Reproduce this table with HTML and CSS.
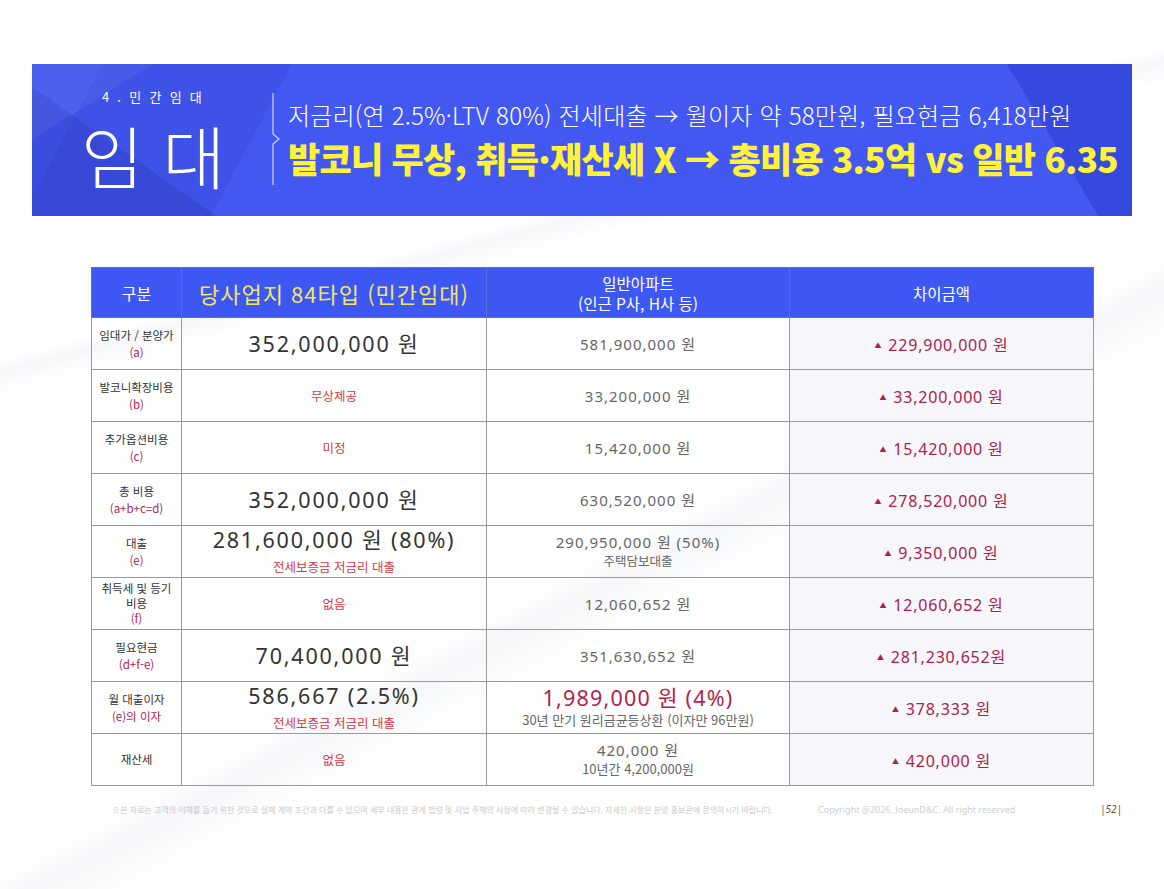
FILE: index.html
```html
<!DOCTYPE html>
<html lang="ko">
<head>
<meta charset="utf-8">
<title>임대</title>
<link rel="stylesheet" href="styles.css">
</head>
<body>
<div class="page">
  <header class="banner">
    <div class="banner-left">
      <div class="kicker">4 . 민 간 임 대</div>
      <div class="title">임 대</div>
    </div>
    <svg class="bracket" width="14" height="92" viewBox="0 0 14 92">
      <path d="M1 0 V41 L7 46 L1 51 V92" fill="none" stroke="rgba(255,255,255,0.75)" stroke-width="1.2"/>
    </svg>
    <div class="banner-text">
      <div class="line1">저금리(연 2.5%·LTV 80%) 전세대출 → 월이자 약 58만원, 필요현금 6,418만원</div>
      <div class="line2">발코니 무상, 취득·재산세 X → 총비용 3.5억 vs 일반 6.35</div>
    </div>
  </header>

  <table class="cmp">
    <colgroup>
      <col class="c1"><col class="c2"><col class="c3"><col class="c4">
    </colgroup>
    <thead>
      <tr>
        <th class="h-label">구분</th>
        <th class="h-ours">당사업지 84타입 (민간임대)</th>
        <th class="h-other">일반아파트<br>(인근 P사, H사 등)</th>
        <th class="h-other">차이금액</th>
      </tr>
    </thead>
    <tbody>
      <tr>
        <td class="lbl">임대가 / 분양가<br><span class="sub">(a)</span></td>
        <td class="big">352,000,000 원</td>
        <td class="mid">581,900,000 원</td>
        <td class="diff"><span class="tri">▲</span> 229,900,000 원</td>
      </tr>
      <tr>
        <td class="lbl">발코니확장비용<br><span class="sub">(b)</span></td>
        <td class="red">무상제공</td>
        <td class="mid">33,200,000 원</td>
        <td class="diff"><span class="tri">▲</span> 33,200,000 원</td>
      </tr>
      <tr>
        <td class="lbl">추가옵션비용<br><span class="sub">(c)</span></td>
        <td class="red">미정</td>
        <td class="mid">15,420,000 원</td>
        <td class="diff"><span class="tri">▲</span> 15,420,000 원</td>
      </tr>
      <tr>
        <td class="lbl">총 비용<br><span class="sub">(a+b+c=d)</span></td>
        <td class="big">352,000,000 원</td>
        <td class="mid">630,520,000 원</td>
        <td class="diff"><span class="tri">▲</span> 278,520,000 원</td>
      </tr>
      <tr>
        <td class="lbl">대출<br><span class="sub">(e)</span></td>
        <td class="big">281,600,000 원 (80%)<br><span class="red-sub">전세보증금 저금리 대출</span></td>
        <td class="mid">290,950,000 원 (50%)<br><span class="gray-sub">주택담보대출</span></td>
        <td class="diff"><span class="tri">▲</span> 9,350,000 원</td>
      </tr>
      <tr>
        <td class="lbl tight">취득세 및 등기<br>비용<br><span class="sub">(f)</span></td>
        <td class="red">없음</td>
        <td class="mid">12,060,652 원</td>
        <td class="diff"><span class="tri">▲</span> 12,060,652 원</td>
      </tr>
      <tr>
        <td class="lbl">필요현금<br><span class="sub">(d+f-e)</span></td>
        <td class="big">70,400,000 원</td>
        <td class="mid">351,630,652 원</td>
        <td class="diff"><span class="tri">▲</span> 281,230,652원</td>
      </tr>
      <tr>
        <td class="lbl">월 대출이자<br><span class="sub">(e)의 이자</span></td>
        <td class="big">586,667 (2.5%)<br><span class="red-sub">전세보증금 저금리 대출</span></td>
        <td class="mid"><span class="big-red">1,989,000 원 (4%)</span><br><span class="gray-sub2">30년 만기 원리금균등상환 (이자만 96만원)</span></td>
        <td class="diff"><span class="tri">▲</span> 378,333 원</td>
      </tr>
      <tr>
        <td class="lbl">재산세</td>
        <td class="red">없음</td>
        <td class="mid">420,000 원<br><span class="gray-sub2">10년간 4,200,000원</span></td>
        <td class="diff"><span class="tri">▲</span> 420,000 원</td>
      </tr>
    </tbody>
  </table>

  <footer class="foot">
    <div class="disclaimer">※본 자료는 고객의 이해를 돕기 위한 것으로 실제 계약 조건과 다를 수 있으며 세부 내용은 관계 법령 및 사업 주체의 사정에 따라 변경될 수 있습니다. 자세한 사항은 분양 홍보관에 문의하시기 바랍니다.</div>
    <div class="copy">Copyright @2026. JoeunD&amp;C. All right reserved</div>
    <div class="pg">|52|</div>
  </footer>
</div>
</body>
</html>
```

FILE: styles.css
```css
* { box-sizing: border-box; }
html, body { margin: 0; padding: 0; background: #ffffff; }
body {
  font-family: "Noto Sans", "Noto Sans CJK KR", sans-serif;
  color: #333;
  width: 1164px;
  height: 889px;
  overflow: hidden;
}
.page {
  padding-top: 64px;
  background:
    linear-gradient(152deg, transparent 58%, rgba(230,232,240,0.35) 60%, transparent 64%),
    linear-gradient(165deg, transparent 30%, rgba(235,236,242,0.4) 31%, transparent 33%),
    #ffffff;
  height: 889px;
}

/* ---------- banner ---------- */
.banner {
  margin-left: 32px;
  width: 1100px;
  height: 152px;
  display: flex;
  align-items: center;
  background:
    linear-gradient(59deg, transparent 89.5%, rgba(30,45,190,0.35) 89.5%),
    linear-gradient(148deg, rgba(255,255,255,0.05) 0 9%, transparent 9%),
    linear-gradient(35deg, rgba(30,40,160,0.22) 0 14%, transparent 14%),
    linear-gradient(118deg, transparent 0 6%, rgba(40,55,190,0.18) 6% 22%, transparent 22%),
    #4358f0;
  color: #fff;
}
.banner-left {
  width: 240px;
  display: flex;
  flex-direction: column;
  align-items: center;
}
.kicker {
  font-family: "Noto Sans CJK KR", sans-serif;
  font-size: 13px;
  line-height: 16px;
  letter-spacing: 2.3px;
  margin-left: 2px;
}
.title {
  font-family: "Noto Sans CJK KR", sans-serif;
  font-weight: 300;
  font-size: 68px;
  line-height: 72px;
  margin-top: 14px;
  margin-left: 2px;
  white-space: nowrap;
}
.bracket { flex: none; margin-top: -2px; }
.banner-text {
  margin-left: 2px;
  font-family: "Noto Sans CJK KR", sans-serif;
}
.line1 {
  font-size: 24px;
  font-weight: 300;
  letter-spacing: 0.2px;
  line-height: 36px;
  white-space: nowrap;
}
.line2 {
  color: #fff239;
  font-weight: 900;
  font-size: 35px;
  letter-spacing: -0.7px;
  line-height: 50px;
  white-space: nowrap;
}

/* ---------- table ---------- */
.cmp {
  margin-top: 51px;
  margin-left: 91px;
  width: 1002px;
  border-collapse: collapse;
  table-layout: fixed;
}
.c1 { width: 90px; }
.c2 { width: 305px; }
.c3 { width: 303px; }
.c4 { width: 304px; }
.cmp th, .cmp td {
  border: 1px solid #9a9a9a;
  text-align: center;
  vertical-align: middle;
  padding: 0;
}
.cmp thead tr { height: 50px; }
.cmp th {
  background: #3d58f2;
  color: #fff;
  font-weight: 400;
  font-family: "Noto Sans CJK KR", sans-serif;
  border-color: #5a6fd6;
}
.cmp .h-label { font-size: 16px; }
.cmp .h-ours { color: #f3e566; font-size: 22px; letter-spacing: 1px; }
.cmp .h-other { font-size: 15.5px; line-height: 20px; }
.cmp tbody tr { height: 52px; }
.cmp tbody td:nth-child(4) { background: #f6f6fb; }

.lbl {
  font-family: "Noto Sans CJK KR", sans-serif;
  font-size: 11.5px;
  line-height: 17px;
  color: #333;
}
.lbl.tight { line-height: 15px; }
.sub { color: #a8265a; font-size: 11.5px; }

.big {
  font-size: 21.5px;
  letter-spacing: 1.8px;
  color: #333;
  line-height: 24px;
}
.red {
  font-family: "Noto Sans CJK KR", sans-serif;
  font-size: 12.5px;
  color: #d8393e;
}
.red-sub {
  display: inline-block;
  font-family: "Noto Sans CJK KR", sans-serif;
  font-size: 12.5px;
  letter-spacing: 0;
  color: #d8393e;
  line-height: 16px;
}
.mid {
  font-size: 15px;
  letter-spacing: 1px;
  color: #666;
  line-height: 18px;
}
.gray-sub {
  font-family: "Noto Sans CJK KR", sans-serif;
  font-size: 12.5px;
  letter-spacing: 0;
  color: #666;
}
.gray-sub2 {
  font-family: "Noto Sans CJK KR", sans-serif;
  font-size: 13px;
  letter-spacing: 0;
  color: #666;
}
.big-red {
  font-size: 21.5px;
  letter-spacing: 1.2px;
  color: #b0244c;
  line-height: 24px;
}
.diff {
  font-size: 16px;
  letter-spacing: 0.8px;
  color: #a8244a;
}
.tri {
  font-size: 7px;
  vertical-align: 3px;
  margin-right: 1px;
}

/* ---------- footer ---------- */
.foot {
  display: flex;
  align-items: center;
  margin-top: 16px;
  margin-left: 112px;
  width: 1010px;
}
.disclaimer {
  font-family: "Noto Sans CJK KR", sans-serif;
  font-size: 8px;
  color: #c9c9c9;
  white-space: nowrap;
  width: 680px;
  overflow: hidden;
}
.copy {
  margin-left: 26px;
  font-size: 9px;
  color: #cfcfcf;
  white-space: nowrap;
}
.pg {
  margin-left: auto;
  font-size: 10px;
  font-style: italic;
  color: #555;
}
```
